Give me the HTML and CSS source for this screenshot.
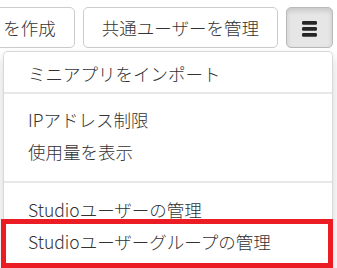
FILE: index.html
```html
<!DOCTYPE html>
<html lang="ja">
<head>
<meta charset="utf-8">
<title>Menu</title>
<link rel="stylesheet" href="styles.css">
</head>
<body>
<div class="toolbar">
  <button class="btn">ミニアプリを作成</button>
  <button class="btn">共通ユーザーを管理</button>
  <button class="btn btn-menu">
    <svg class="bars" width="15" height="16" viewBox="0 0 15 16" aria-hidden="true">
      <rect x="0" y="0" width="15" height="3.8" rx="1.4" fill="#262626"/>
      <rect x="0" y="6" width="15" height="3.8" rx="1.4" fill="#262626"/>
      <rect x="0" y="12" width="15" height="3.8" rx="1.4" fill="#262626"/>
    </svg>
  </button>
</div>
<ul class="dropdown">
  <li class="item">ミニアプリをインポート</li>
  <li class="divider divider-a"></li>
  <li class="item">IPアドレス制限</li>
  <li class="item">使用量を表示</li>
  <li class="divider divider-b"></li>
  <li class="item">Studioユーザーの管理</li>
  <li class="item">Studioユーザーグループの管理</li>
</ul>
<div class="highlight"></div>
</body>
</html>
```

FILE: styles.css
```css
html, body {
  margin: 0;
  padding: 0;
  background: #ffffff;
  overflow: hidden;
  width: 337px;
  height: 268px;
  font-family: "Noto Sans CJK JP", "Noto Sans", sans-serif;
}

.toolbar {
  display: flex;
  justify-content: flex-end;
  gap: 8px;
  padding: 7px 4px 0 0;
  width: 337px;
  box-sizing: border-box;
}

.btn {
  flex-shrink: 0;
  white-space: nowrap;
  height: 41px;
  padding: 0 18px;
  border: 1px solid #cccccc;
  border-radius: 5px;
  background: #ffffff;
  color: #333333;
  font-family: "Noto Sans CJK JP", "Noto Sans", sans-serif;
  font-size: 17.5px;
  font-weight: 300;
  line-height: 39px;
}

.btn-menu {
  width: 47px;
  padding: 0;
  background: #e6e6e6;
  border-color: #b9b9b9;
  box-shadow: inset 0 3px 5px rgba(0, 0, 0, 0.125);
  display: flex;
  align-items: center;
  justify-content: center;
}

.bars {
  display: block;
  margin-top: 2px;
}

.dropdown {
  position: absolute;
  top: 51px;
  left: 3px;
  width: 330px;
  box-sizing: border-box;
  margin: 0;
  padding: 6px 0 20px;
  list-style: none;
  background: #ffffff;
  border: 1px solid rgba(0, 0, 0, 0.15);
  border-radius: 5px;
  box-shadow: 0 6px 12px rgba(0, 0, 0, 0.175);
}

.item {
  height: 32px;
  line-height: 32px;
  padding: 0 0 0 24px;
  font-size: 17.5px;
  font-weight: 300;
  color: #333333;
  white-space: nowrap;
}

.divider {
  height: 2px;
  background: #e8e8e8;
}

.divider-a {
  margin: 2px 0 10px;
}

.divider-b {
  margin: 13px 0 11px;
}

.highlight {
  position: absolute;
  top: 219px;
  left: 1px;
  width: 332px;
  height: 49px;
  box-sizing: border-box;
  border: 5px solid #ec1c24;
}
```
